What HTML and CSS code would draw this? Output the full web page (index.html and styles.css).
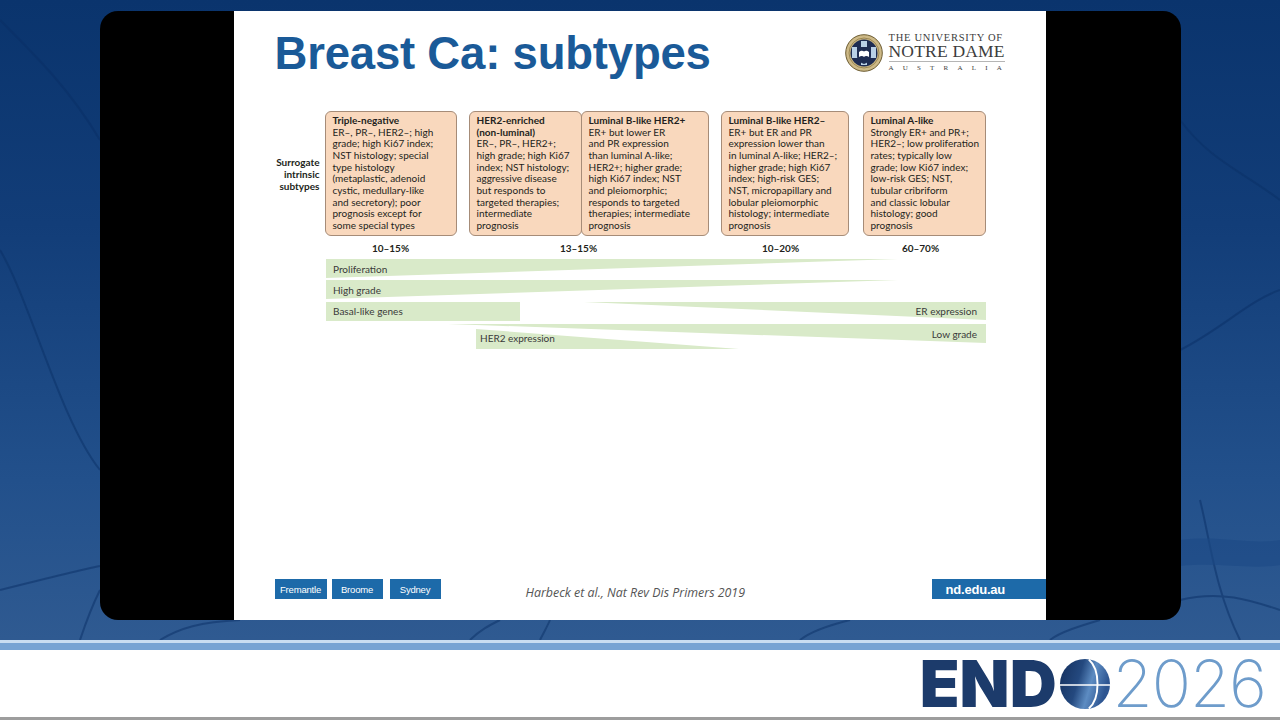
FILE: index.html
```html
<!DOCTYPE html>
<html lang="en">
<head>
<meta charset="utf-8">
<title>Breast Ca: subtypes</title>
<link rel="stylesheet" href="styles.css">
</head>
<body>
<div class="stage">
  <svg class="bg-lines" width="1280" height="640" viewBox="0 0 1280 640" aria-hidden="true">
    <g fill="none" stroke="#0a2f66" stroke-width="2" opacity="0.5">
      <path d="M0 20 C40 60 70 90 100 140"/>
      <path d="M0 250 C30 300 60 420 100 470"/>
      <path d="M0 590 C40 580 80 570 100 566"/>
      <path d="M80 640 C90 610 95 600 100 590"/>
      <path d="M1180 120 C1210 160 1240 170 1280 200"/>
      <path d="M1180 350 C1220 330 1250 300 1280 290"/>
      <path d="M1200 500 C1210 540 1215 590 1240 640"/>
      <path d="M1180 600 C1220 590 1250 600 1280 610"/>
      <path d="M160 640 C180 628 200 622 240 620"/>
      <path d="M470 640 C480 630 490 625 500 620"/>
      <path d="M540 640 C545 630 548 625 550 620"/>
      <path d="M800 640 C810 632 830 625 850 620"/>
      <path d="M1050 640 C1060 632 1080 626 1100 620"/>
    </g>
    <path d="M1180 540 C1220 535 1250 545 1280 540 L1280 565 C1250 570 1220 562 1180 566 Z" fill="#1d4a86" opacity="0.6"/>
  </svg>
  <div class="frame">
    <div class="slide">
      <header class="slide-head">
        <h1 class="title">Breast Ca: subtypes</h1>
        <div class="und-logo">
          <svg class="seal" width="38" height="38" viewBox="0 0 38 38" aria-hidden="true">
            <circle cx="19" cy="19" r="18.3" fill="#cdb987" stroke="#6d5d33" stroke-width="1"/>
            <circle cx="19" cy="19" r="15" fill="none" stroke="#8f7b45" stroke-width="0.8"/>
            <circle cx="19" cy="19" r="13.5" fill="#1e2c52"/>
            <path d="M16 7 H22 V13 H31 V24 H22 V31 H16 V24 H7 V13 H16 Z" fill="#b9d0e6"/>
            <path d="M12 13 H26 V22 C26 27 22 29 19 30 C16 29 12 27 12 22 Z" fill="#1e2c52"/>
            <path d="M14 18 C16 16 18 16.5 19 17.5 C20 16.5 22 16 24 18 V23 C22 21.5 20 21.8 19 23 C18 21.8 16 21.5 14 23 Z" fill="#ffffff"/>
          </svg>
          <div class="und-text">
            <span class="und-top">THE UNIVERSITY OF</span>
            <span class="und-main">NOTRE DAME</span>
            <span class="und-sub">AUSTRALIA</span>
          </div>
        </div>
      </header>

      <section class="chart">
        <div class="boxes-row">
          <div class="row-label">Surrogate<br>intrinsic<br>subtypes</div>
          <div class="box b1"><b>Triple-negative</b><br>ER–, PR–, HER2–; high<br>grade; high Ki67 index;<br>NST histology; special<br>type histology<br>(metaplastic, adenoid<br>cystic, medullary-like<br>and secretory); poor<br>prognosis except for<br>some special types</div>
          <div class="box b2"><b>HER2-enriched<br>(non-luminal)</b><br>ER–, PR–, HER2+;<br>high grade; high Ki67<br>index; NST histology;<br>aggressive disease<br>but responds to<br>targeted therapies;<br>intermediate<br>prognosis</div>
          <div class="box b3"><b>Luminal B-like HER2+</b><br>ER+ but lower ER<br>and PR expression<br>than luminal A-like;<br>HER2+; higher grade;<br>high Ki67 index; NST<br>and pleiomorphic;<br>responds to targeted<br>therapies; intermediate<br>prognosis</div>
          <div class="box b4"><b>Luminal B-like HER2–</b><br>ER+ but ER and PR<br>expression lower than<br>in luminal A-like; HER2–;<br>higher grade; high Ki67<br>index; high-risk GES;<br>NST, micropapillary and<br>lobular pleiomorphic<br>histology; intermediate<br>prognosis</div>
          <div class="box b5"><b>Luminal A-like</b><br>Strongly ER+ and PR+;<br>HER2–; low proliferation<br>rates; typically low<br>grade; low Ki67 index;<br>low-risk GES; NST,<br>tubular cribriform<br>and classic lobular<br>histology; good<br>prognosis</div>
        </div>
        <div class="pct-row">
          <span class="pct p1">10–15%</span>
          <span class="pct p2">13–15%</span>
          <span class="pct p3">10–20%</span>
          <span class="pct p4">60–70%</span>
        </div>
        <svg class="bars" width="665" height="96" viewBox="0 0 665 96">
          <g fill="#d9eac9">
            <polygon points="1,3 573,3 1,22"/>
            <polygon points="1,24 573,24 1,43"/>
            <rect x="1" y="46" width="194" height="19"/>
            <polygon points="259,46 661,46 661,64"/>
            <polygon points="123,68 661,68 661,87"/>
            <polygon points="151,73 414,93 151,93"/>
          </g>
          <g class="bar-text">
            <text x="8" y="16.5">Proliferation</text>
            <text x="8" y="37.5">High grade</text>
            <text x="8" y="58.5">Basal-like genes</text>
            <text x="652" y="58.5" text-anchor="end">ER expression</text>
            <text x="652" y="81.5" text-anchor="end">Low grade</text>
            <text x="155" y="85.5">HER2 expression</text>
          </g>
        </svg>
      </section>

      <footer class="slide-foot">
        <span class="loc l1">Fremantle</span>
        <span class="loc l2">Broome</span>
        <span class="loc l3">Sydney</span>
        <span class="cite">Harbeck et al., Nat Rev Dis Primers 2019</span>
        <span class="site">nd.edu.au</span>
      </footer>
    </div>
  </div>
</div>
<div class="stripe-light"></div>
<div class="stripe-blue"></div>
<div class="brand">
  <div class="endo">
    <span class="endo-end">END</span>
    <svg class="globe" width="52" height="52" viewBox="0 0 54 54" aria-hidden="true">
      <defs>
        <linearGradient id="gl" x1="0" y1="0" x2="1" y2="0.3">
          <stop offset="0" stop-color="#142f5c"/>
          <stop offset="0.45" stop-color="#24497f"/>
          <stop offset="0.7" stop-color="#5d8cc2"/>
          <stop offset="1" stop-color="#2d5591"/>
        </linearGradient>
      </defs>
      <circle cx="27" cy="27" r="26" fill="url(#gl)"/>
      <path d="M31 1.5 C43 12 43 42 31 52.5" fill="none" stroke="#ffffff" stroke-width="2"/>
      <line x1="1" y1="28" x2="53" y2="28" stroke="#ffffff" stroke-width="1.4"/>
    </svg>
    <span class="endo-year">2026</span>
  </div>
</div>
</body>
</html>
```

FILE: styles.css
```css
html, body {
  margin: 0;
  padding: 0;
}

body {
  width: 1280px;
  height: 720px;
  overflow: hidden;
  background: #ffffff;
  font-family: "Liberation Sans", Arial, sans-serif;
}

.stage {
  position: relative;
  height: 640px;
  padding-top: 11px;
  box-sizing: border-box;
  overflow: hidden;
  background: linear-gradient(180deg, #0a346d 0%, #123d78 35%, #22508b 75%, #2f5a91 100%);
}

.bg-lines {
  position: absolute;
  left: 0;
  top: 0;
}

.frame {
  position: relative;
  width: 1081px;
  height: 609px;
  margin: 0 auto;
  padding-left: 134px;
  box-sizing: border-box;
  background: #000000;
  border-radius: 18px;
}

.slide {
  width: 812px;
  height: 609px;
  background: #ffffff;
  display: flex;
  flex-direction: column;
}

/* header */
.slide-head {
  display: flex;
  justify-content: space-between;
  align-items: flex-start;
  padding: 17px 41px 0 41px;
}

.title {
  margin: 0;
  font-family: "Liberation Sans", Arial, sans-serif;
  font-weight: 700;
  font-size: 45.5px;
  line-height: 52px;
  color: #1a5a98;
  letter-spacing: -0.2px;
}

.und-logo {
  display: flex;
  align-items: center;
  margin-top: 4px;
}

.seal {
  display: block;
  margin-right: 6px;
}

.und-text {
  display: flex;
  flex-direction: column;
  width: 116px;
  font-family: "Liberation Serif", "Times New Roman", serif;
  color: #3d3d3d;
}

.und-top {
  font-size: 10.5px;
  line-height: 11px;
  letter-spacing: 0.75px;
  white-space: nowrap;
}

.und-main {
  font-size: 17.5px;
  line-height: 16px;
  letter-spacing: 0.2px;
  white-space: nowrap;
  padding-bottom: 2px;
  border-bottom: 1px solid #b5b5b5;
}

.und-sub {
  font-size: 7px;
  line-height: 10px;
  letter-spacing: 9.2px;
  white-space: nowrap;
  margin-top: 1px;
}

/* chart */
.chart {
  display: flex;
  flex-direction: column;
  font-family: Lato, "Open Sans", sans-serif;
  color: #231f20;
}

.boxes-row {
  display: flex;
  align-items: center;
  margin-top: 31px;
}

.row-label {
  width: 86px;
  margin-right: 5px;
  text-align: right;
  font-weight: 700;
  font-size: 10px;
  line-height: 12px;
}

.box {
  box-sizing: border-box;
  height: 125px;
  padding: 3px 0 0 7px;
  border: 1px solid #a68c78;
  border-radius: 6px;
  background: #f9d8bd;
  font-size: 10px;
  line-height: 11.67px;
  white-space: nowrap;
  overflow: hidden;
}

.box b {
  font-weight: 700;
}

.b1 { width: 132px; }
.b2 { width: 113px; margin-left: 12px; }
.b3 { width: 128px; margin-left: -1px; }
.b4 { width: 128px; margin-left: 12px; }
.b5 { width: 123px; margin-left: 14px; }

.pct-row {
  display: flex;
  margin-top: 6px;
  padding-left: 91px;
  font-weight: 700;
  font-size: 10px;
  line-height: 12px;
}

.pct {
  text-align: center;
  white-space: nowrap;
}

.p1 { width: 132px; }
.p2 { width: 244px; }
.p3 { width: 160px; }
.p4 { width: 120px; }

.bars {
  display: block;
  margin: 2px 0 0 91px;
}

.bar-text text {
  font-family: Lato, "Open Sans", sans-serif;
  font-size: 10px;
  fill: #3a3a3a;
}

/* footer */
.slide-foot {
  margin-top: auto;
  margin-bottom: 21px;
  padding-left: 41px;
  display: flex;
  align-items: center;
  height: 20px;
}

.loc {
  display: flex;
  align-items: center;
  justify-content: center;
  height: 20px;
  background: #1d6aa9;
  color: #ffffff;
  font-size: 9.5px;
  letter-spacing: -0.2px;
}

.l1 { width: 52px; }
.l2 { width: 51px; margin-left: 5px; }
.l3 { width: 51px; margin-left: 7px; }

.cite {
  margin-left: 85px;
  margin-top: 8px;
  font-family: "Open Sans", "Liberation Sans", sans-serif;
  font-style: italic;
  font-size: 12.4px;
  line-height: 16px;
  color: #555555;
  white-space: nowrap;
}

.site {
  margin-left: auto;
  width: 114px;
  height: 20px;
  box-sizing: border-box;
  padding-left: 14px;
  display: flex;
  align-items: center;
  background: #1d6aa9;
  color: #ffffff;
  font-weight: 700;
  font-size: 13px;
  letter-spacing: -0.2px;
}

/* bottom branding */
.stripe-light {
  height: 3px;
  background: #cadef1;
}

.stripe-blue {
  height: 7px;
  background: #78a4d3;
}

.brand {
  height: 67px;
  border-bottom: 3px solid #9d9d9d;
  display: flex;
  justify-content: flex-end;
  align-items: center;
  padding-right: 14px;
}

.endo {
  display: flex;
  align-items: center;
}

.endo-end {
  font-family: Inter, "Liberation Sans", sans-serif;
  font-weight: 900;
  font-size: 65px;
  line-height: 66px;
  color: #1c3b6b;
  letter-spacing: 0;
}

.globe {
  display: block;
  margin: 0 2px 0 2px;
}

.endo-year {
  font-family: Inter, "Liberation Sans", sans-serif;
  font-weight: 200;
  font-size: 65px;
  line-height: 66px;
  color: #6e9ccb;
  letter-spacing: -1px;
}
```
